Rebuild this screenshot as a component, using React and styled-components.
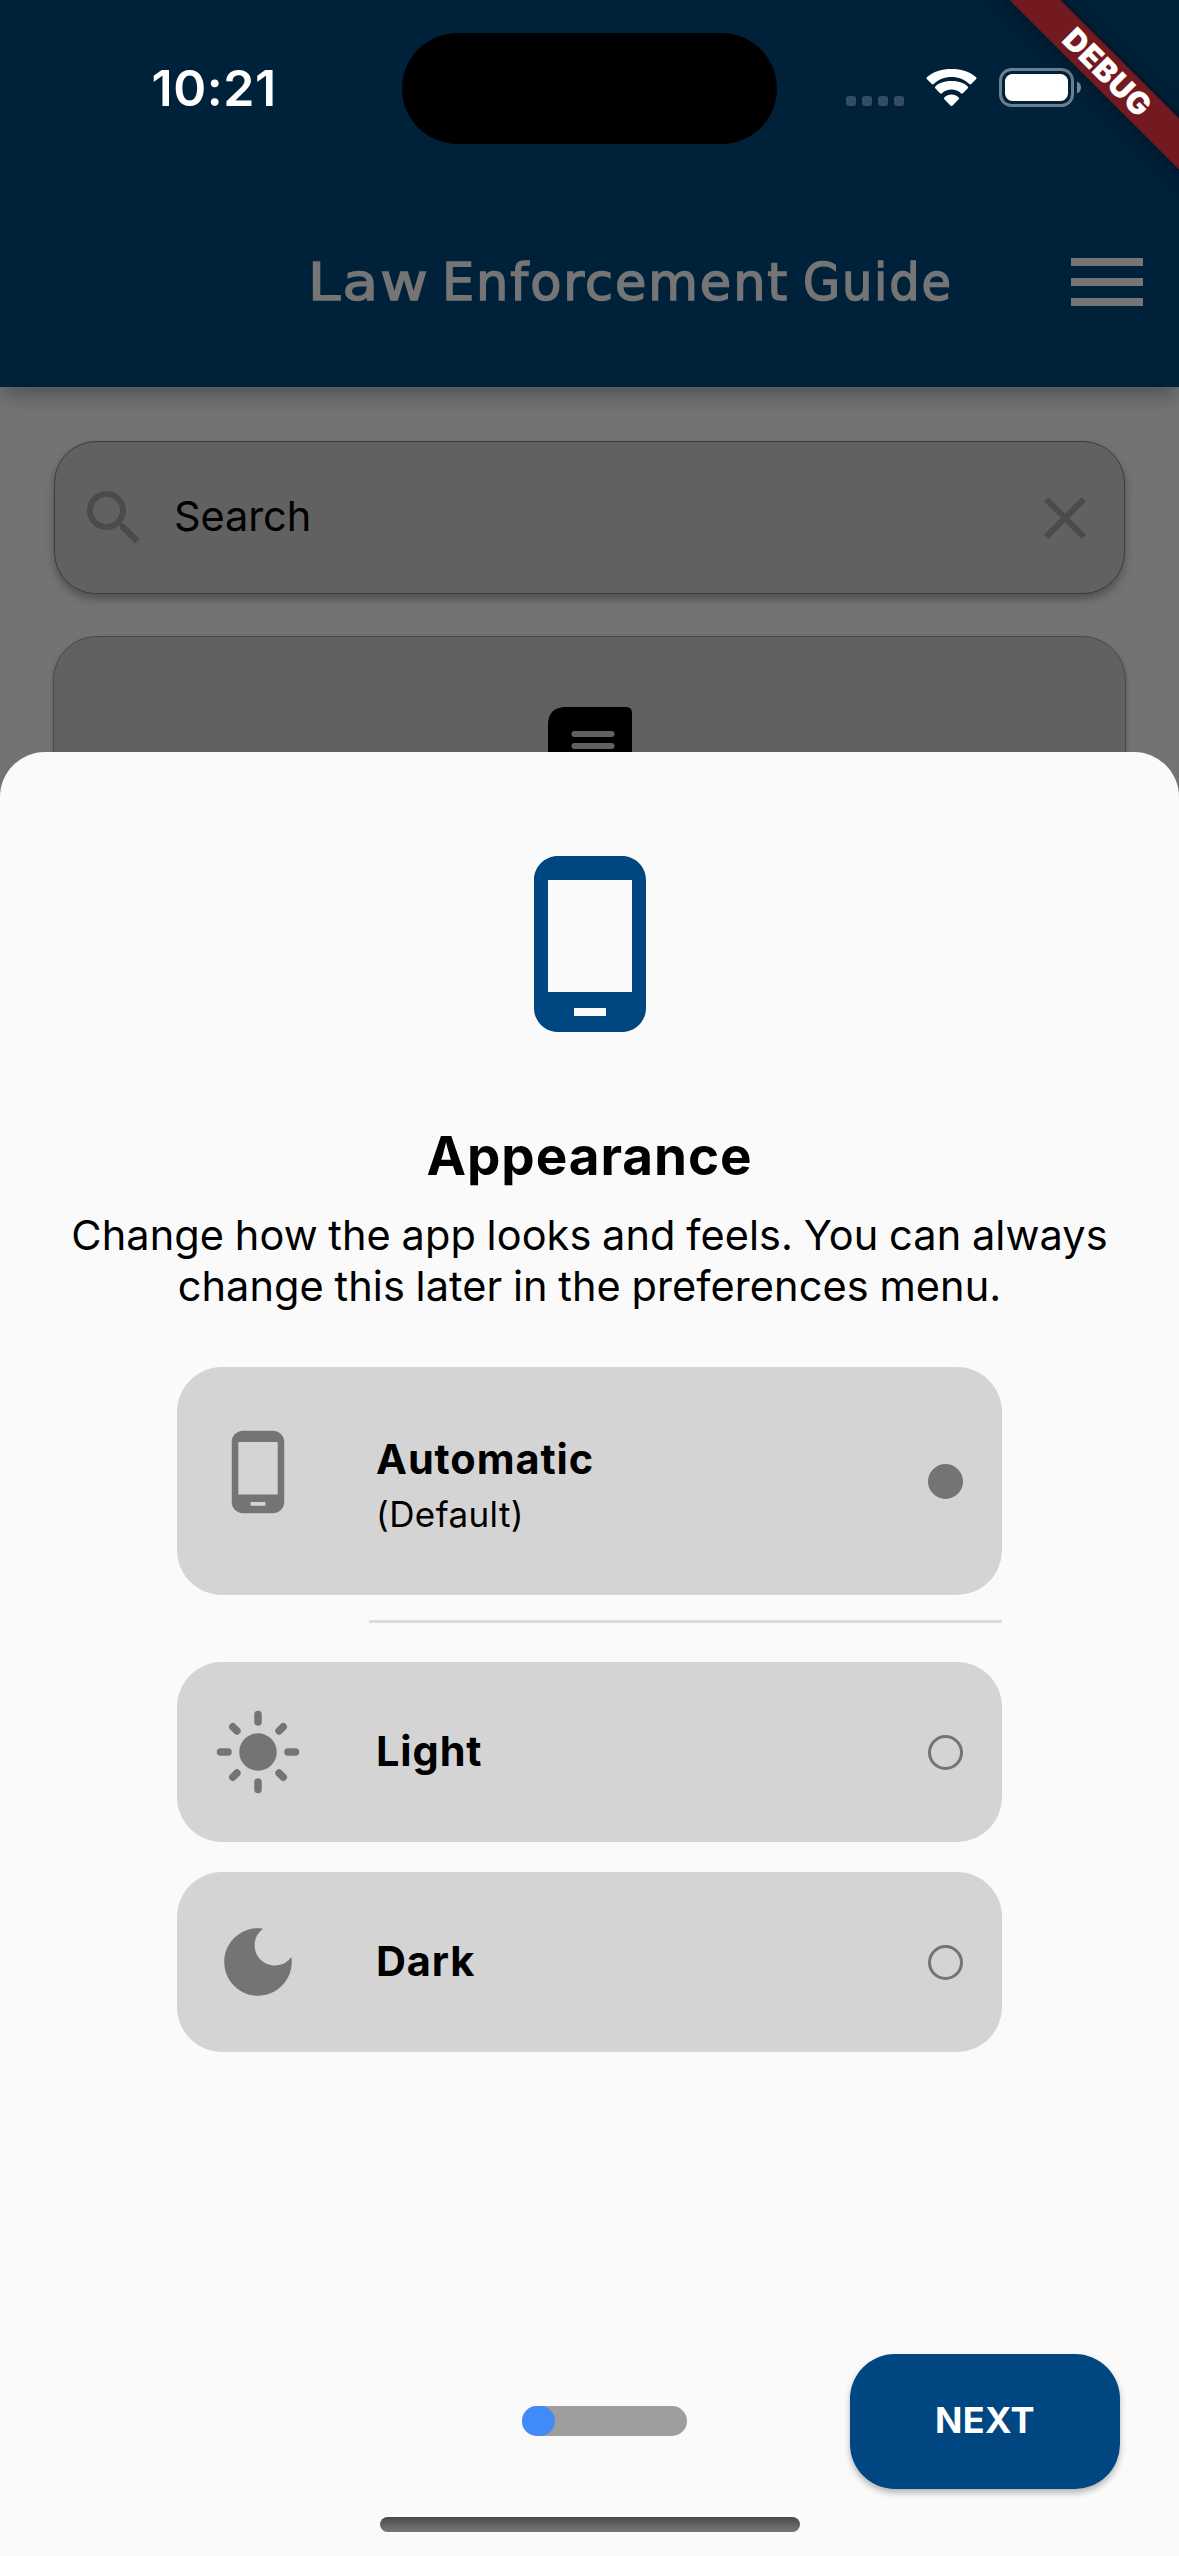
import React, { useState } from "react";
import styled, { createGlobalStyle, css } from "styled-components";

const GlobalStyle = createGlobalStyle`
  *, *::before, *::after { box-sizing: border-box; }
  html, body { margin: 0; padding: 0; }
  body {
    font-family: Inter, "Liberation Sans", sans-serif;
    background: #737373;
    -webkit-font-smoothing: antialiased;
  }
  button { font: inherit; border: 0; padding: 0; cursor: pointer; }
`;

const Screen = styled.div`
  position: relative;
  width: 1179px;
  height: 2556px;
  overflow: hidden;
  background: #737373;
`;

const Header = styled.header`
  height: 387px;
  background: #00213a;
  box-shadow: 0 12px 18px -3px rgba(0, 0, 0, 0.27);
`;

const StatusBar = styled.div`
  display: grid;
  grid-template-columns: 402px 375px 1fr;
  height: 177px;
  padding-top: 33px;
  align-items: start;
`;

const Clock = styled.time`
  padding-left: 151.5px;
  margin-top: 25px;
  font-size: 50px;
  line-height: 60px;
  font-weight: 600;
  letter-spacing: 0.6px;
  color: #fff;
`;

const Island = styled.div`
  height: 111px;
  border-radius: 56px;
  background: #000;
`;

const StatusIcons = styled.div`
  display: flex;
  align-items: flex-start;
  padding: 35px 0 0 69px;
`;

const Signal = styled.div`
  display: flex;
  gap: 6px;
  margin: 28px 22px 0 0;
  span {
    width: 10px;
    height: 10px;
    border-radius: 3px;
    background: #334d61;
  }
`;

const WifiIcon = styled.svg`
  width: 51px;
  height: 38px;
  margin: 1px 22px 0 0;
`;

const BatteryIcon = styled.svg`
  width: 83px;
  height: 39px;
`;

const TitleBar = styled.div`
  display: flex;
  align-items: center;
  height: 210px;
  padding: 0 24px 0 308px;
`;

const AppTitle = styled.h1`
  display: flex;
  margin: 2px 0 0;
  flex: 1;
  font-family: "DejaVu Sans", sans-serif;
  font-size: 51px;
  line-height: 60px;
  font-weight: 400;
  white-space: pre;
  color: #757575;
  letter-spacing: 1.9px;
  -webkit-text-stroke: 1.5px #757575;
`;

const TitleWord = styled.span`
  width: ${(p) => p.$width}px;
  transform: scaleX(${(p) => p.$stretch});
  transform-origin: left center;
`;

const Icon = styled.svg`
  display: block;
  flex: none;
  width: ${(p) => p.$size}px;
  height: ${(p) => p.$size}px;
  fill: ${(p) => p.$color};
`;

const Content = styled.main`
  padding: 54px 53px 0;
`;

const SearchField = styled.div`
  display: flex;
  align-items: center;
  height: 153px;
  margin: 0 1px 42px;
  padding: 0 23px;
  border: 1px solid #3d3d3d;
  border-radius: 42px;
  background: #616161;
  box-shadow: 0 5px 9px rgba(0, 0, 0, 0.3);
`;

const SearchText = styled.span`
  flex: 1;
  margin-left: 24px;
  padding-bottom: 4px;
  font-size: 41.5px;
  letter-spacing: -0.1px;
  color: #000;
`;

const GuideCard = styled.section`
  display: flex;
  justify-content: center;
  height: 500px;
  padding-top: 70px;
  border: 1px solid #4a4a4a;
  border-radius: 44px;
  background: #616161;
  box-shadow: 0 2px 4px rgba(0, 0, 0, 0.25);
`;

const NoteIcon = styled.svg`
  width: 84px;
  height: 100px;
`;

const Sheet = styled.section`
  position: absolute;
  left: 0;
  right: 0;
  bottom: 0;
  height: 1804.5px;
  display: flex;
  flex-direction: column;
  align-items: center;
  padding-top: 96.5px;
  border-radius: 45px 45px 0 0;
  background: #fafafa;
`;

const SheetTitle = styled.h2`
  margin: 84px 0 0;
  font-size: 53px;
  line-height: 64px;
  font-weight: 700;
  letter-spacing: 0.95px;
  color: #000;
`;

const Description = styled.p`
  margin: 22px 0 0;
  width: 1100px;
  font-size: 41.5px;
  line-height: 51px;
  letter-spacing: 0.08px;
  word-spacing: -1.1px;
  text-align: center;
  color: #000;
`;

const Options = styled.div`
  width: 825px;
  margin-top: 55px;
`;

const Option = styled.button`
  display: flex;
  align-items: center;
  width: 100%;
  height: ${(p) => (p.$tall ? 228 : 180)}px;
  padding: 0 39px 0 36px;
  border-radius: 45px;
  background: #d4d4d4;
  text-align: left;
  ${(p) => p.$spaced && css`
    margin-top: 30px;
  `}
`;

const OptionIcon = styled.span`
  margin-right: 73px;
  padding-bottom: ${(p) => (p.$raised ? 19 : 0)}px;
`;

const OptionText = styled.span`
  flex: 1;
  display: flex;
  flex-direction: column;
  padding: ${(p) => (p.$tall ? "8px 0 0" : "0 0 2px")};
`;

const OptionName = styled.span`
  font-size: 41.5px;
  line-height: 52px;
  font-weight: 700;
  letter-spacing: 0.9px;
  color: #000;
`;

const OptionNote = styled.span`
  margin-top: 6px;
  font-size: 35px;
  line-height: 46px;
  letter-spacing: 0.4px;
  color: #000;
`;

const Radio = styled.span`
  width: 35px;
  height: 35px;
  border-radius: 50%;
  border: 3px solid #747474;
  background: ${(p) => (p.$checked ? "#747474" : "transparent")};
`;

const Divider = styled.hr`
  margin: 25px 0 39.3px 192px;
  height: 3px;
  border: 0;
  background: #dcdcdc;
`;

const Footer = styled.footer`
  display: grid;
  grid-template-columns: 1fr 165px 1fr;
  align-items: center;
  width: 100%;
  margin-top: auto;
  padding: 0 59px 0 89px;
`;

const Progress = styled.div`
  grid-column: 2;
  height: 30px;
  border-radius: 15px;
  background: #9e9e9e;
`;

const ProgressValue = styled.div`
  height: 100%;
  border-radius: 15px;
  background: #408bf7;
`;

const NextButton = styled.button`
  justify-self: end;
  width: 270px;
  height: 135px;
  padding-bottom: 3px;
  border-radius: 45px;
  background: #004680;
  box-shadow: 0 4px 6px rgba(0, 0, 0, 0.28);
  font-size: 36px;
  font-weight: 700;
  letter-spacing: 0.4px;
  color: #fff;
`;

const HomeBar = styled.div`
  width: 420px;
  height: 15px;
  margin: 28.5px 0 24px;
  border-radius: 8px;
  background: linear-gradient(#484a48, #787878);
`;

const DebugBanner = styled.div`
  position: absolute;
  top: 52.5px;
  right: -126.5px;
  width: 400px;
  height: 36px;
  padding-left: 4px;
  transform: rotate(45deg);
  display: flex;
  align-items: center;
  justify-content: center;
  background: #731a20;
  box-shadow: 0 0 18px rgba(0, 0, 0, 0.5);
  font-size: 31px;
  font-weight: 900;
  line-height: 36px;
  letter-spacing: 0.5px;
  color: #fff;
`;

const PHONE =
  "M16 1H8C6.34 1 5 2.34 5 4v16c0 1.66 1.34 3 3 3h8c1.66 0 3-1.34 3-3V4c0-1.66-1.34-3-3-3zm-2 20h-4v-1h4v1zm3.25-3H6.75V4h10.5v14z";
const MOON =
  "M12 3c-4.97 0-9 4.03-9 9s4.03 9 9 9 9-4.03 9-9c0-.46-.04-.92-.1-1.36-.98 1.37-2.58 2.26-4.4 2.26-2.98 0-5.4-2.42-5.4-5.4 0-1.81.89-3.42 2.26-4.4-.44-.06-.9-.1-1.36-.1z";
const SEARCH =
  "M15.5 14h-.79l-.28-.27C15.41 12.59 16 11.11 16 9.5 16 5.91 13.09 3 9.5 3S3 5.91 3 9.5 5.91 16 9.5 16c1.61 0 3.09-.59 4.23-1.57l.27.28v.79l5 4.99L20.49 19l-4.99-5zm-6 0C7.01 14 5 11.99 5 9.5S7.01 5 9.5 5 14 7.01 14 9.5 11.99 14 9.5 14z";
const CLOSE =
  "M19 6.41L17.59 5 12 10.59 6.41 5 5 6.41 10.59 12 5 17.59 6.41 19 12 13.41 17.59 19 19 17.59 13.41 12z";
const MENU = "M3 18h18v-2H3v2zm0-5h18v-2H3v2zm0-7v2h18V6H3z";

function MaterialIcon({ path, size, color }) {
  return (
    <Icon viewBox="0 0 24 24" $size={size} $color={color} aria-hidden="true">
      <path d={path} />
    </Icon>
  );
}

function SunIcon({ size, color }) {
  return (
    <Icon viewBox="0 0 24 24" $size={size} $color={color} aria-hidden="true">
      <circle cx="12" cy="12" r="5" />
      <g stroke={color} strokeWidth="2" strokeLinecap="round">
        {[0, 90, 180, 270].map((angle) => (
          <g key={angle} transform={`rotate(${angle} 12 12)`}>
            <path d="M2 12h2" />
            <path d="M5.28 5.28l1.1 1.1" />
          </g>
        ))}
      </g>
    </Icon>
  );
}

const OPTIONS = [
  { id: "auto", name: "Automatic", note: "(Default)", icon: <MaterialIcon path={PHONE} size={90} color="#747474" /> },
  { id: "light", name: "Light", icon: <SunIcon size={90} color="#747474" /> },
  { id: "dark", name: "Dark", icon: <MaterialIcon path={MOON} size={90} color="#747474" /> },
];

function Status() {
  return (
    <StatusBar>
      <Clock>10:21</Clock>
      <Island />
      <StatusIcons>
        <Signal>
          <span />
          <span />
          <span />
          <span />
        </Signal>
        <WifiIcon viewBox="0 0 51 38">
          <path
            fill="#fff"
            d="M25.500 8.000C32.300 8.000 38.600 10.600 43.300 15.000Q44.300 15.900 45.200 15.000L50.200 10.000Q51 9.100 50.100 8.300C43.600 2.300 35 0 25.500 0S7.400 2.300 .9 8.300Q0 9.100 .8 10.000L5.800 15.000Q6.700 15.900 7.700 15.000C12.400 10.600 18.700 8.000 25.500 8.000Z"
          />
          <path
            fill="#fff"
            d="M25.500 20.600C29.100 20.600 32.400 21.900 35 24.200Q36 25.100 36.900 24.200L41.800 19.200Q42.700 18.300 41.700 17.400C37.400 13.400 31.700 12 25.500 12S13.600 13.400 9.300 17.400Q8.300 18.300 9.200 19.200L14.100 24.200Q15 25.100 16 24.200C18.600 21.900 21.900 20.600 25.500 20.600Z"
          />
          <path
            fill="#fff"
            d="M32.700 28.400Q33.600 29.300 32.700 30.200L26.300 36.700Q25.500 37.500 24.700 36.700L18.300 30.200Q17.400 29.300 18.300 28.400C20.200 26.500 22.700 25.500 25.500 25.500S30.800 26.500 32.700 28.400Z"
          />
        </WifiIcon>
        <BatteryIcon viewBox="0 0 83 39">
          <rect x="1.500" y="1.500" width="72" height="36" rx="11" fill="none" stroke="#6b7f8e" strokeWidth="3" />
          <rect x="6" y="6" width="63" height="27" rx="7.500" fill="#fff" />
          <path d="M78 13.500c2.600 1 4 3.300 4 6s-1.400 5-4 6z" fill="#7a8b99" />
        </BatteryIcon>
      </StatusIcons>
    </StatusBar>
  );
}

export default function App() {
  const [theme, setTheme] = useState("auto");
  const step = 1;
  const steps = 5;

  return (
    <>
      <GlobalStyle />
      <Screen>
        <Header>
          <Status />
          <TitleBar>
            <AppTitle>
              <TitleWord $width={134} $stretch={1.14}>Law </TitleWord>
              <TitleWord $width={361} $stretch={1}>Enforcement </TitleWord>
              <TitleWord $width={150} $stretch={0.94}>Guide</TitleWord>
            </AppTitle>
            <MaterialIcon path={MENU} size={96} color="#757575" />
          </TitleBar>
        </Header>

        <Content>
          <SearchField>
            <MaterialIcon path={SEARCH} size={72} color="#4b4b4b" />
            <SearchText>Search</SearchText>
            <MaterialIcon path={CLOSE} size={72} color="#4b4b4b" />
          </SearchField>
          <GuideCard>
            <NoteIcon viewBox="0 0 84 100">
              <path d="M18 0H78Q84 0 84 6V100H0V18Q0 0 18 0Z" />
              <rect x="23.500" y="24" width="43" height="6" rx="3" fill="#616161" />
              <rect x="23.500" y="36" width="43" height="6" rx="3" fill="#616161" />
            </NoteIcon>
          </GuideCard>
        </Content>

        <Sheet>
          <MaterialIcon path={PHONE} size={192} color="#004680" />
          <SheetTitle>Appearance</SheetTitle>
          <Description>
            Change how the app looks and feels. You can always
            <br />
            change this later in the preferences menu.
          </Description>
          <Options>
            {OPTIONS.map((option, index) => (
              <React.Fragment key={option.id}>
                <Option
                  type="button"
                  $tall={Boolean(option.note)}
                  $spaced={index > 1}
                  onClick={() => setTheme(option.id)}
                >
                  <OptionIcon $raised={Boolean(option.note)}>{option.icon}</OptionIcon>
                  <OptionText $tall={Boolean(option.note)}>
                    <OptionName>{option.name}</OptionName>
                    {option.note && <OptionNote>{option.note}</OptionNote>}
                  </OptionText>
                  <Radio $checked={theme === option.id} />
                </Option>
                {index === 0 && <Divider />}
              </React.Fragment>
            ))}
          </Options>
          <Footer>
            <Progress>
              <ProgressValue style={{ width: `${(step / steps) * 100}%` }} />
            </Progress>
            <NextButton type="button">NEXT</NextButton>
          </Footer>
          <HomeBar />
        </Sheet>

        <DebugBanner>DEBUG</DebugBanner>
      </Screen>
    </>
  );
}
